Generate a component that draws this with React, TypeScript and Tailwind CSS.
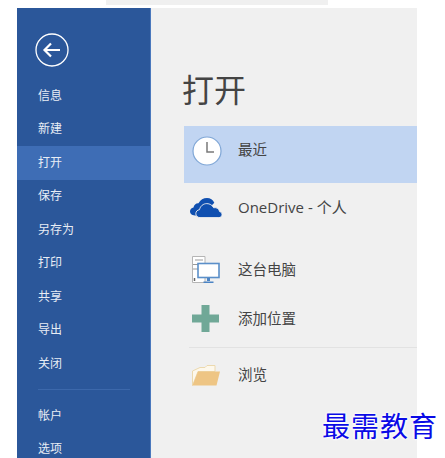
const NAV_TOP = ["信息", "新建", "打开", "保存", "另存为", "打印", "共享", "导出", "关闭"];
const NAV_BOTTOM = ["帐户", "选项"];
const CJK = "font-['Open_Sans','Noto_Sans_CJK_SC',sans-serif]";

function NavItem({ label }: { label: string }) {
  const active = label === "打开";
  return (
    <div
      className={`flex h-[33.5px] items-center pl-[21px] text-[12px] text-[#e8edf5] ${
        active ? "bg-[#3e6db5]" : ""
      }`}
    >
      {label}
    </div>
  );
}

function BackIcon() {
  return (
    <svg width="34" height="34" viewBox="0 0 34 34" fill="none" stroke="#fff">
      <circle cx="17" cy="17" r="16" strokeWidth="1.3" />
      <path d="M9.5 17H25M16 10.5 9.5 17l6.5 6.5" strokeWidth="2.2" />
    </svg>
  );
}

function ClockIcon() {
  return (
    <svg width="30" height="30" viewBox="0 0 30 30" fill="none">
      <circle cx="15" cy="15" r="14" fill="#fff" stroke="#7fa6d6" strokeWidth="1.2" />
      <path d="M15 6v10h7" stroke="#7a7a7a" strokeWidth="1.5" />
    </svg>
  );
}

function CloudIcon() {
  return (
    <svg width="32" height="20" viewBox="0 0 32 20">
      <path
        d="M5 17.500C1.500 17.500 0 15.300 0 13.300c0-2 1.500-3.700 3.500-3.900C4 6.800 6 5 8.500 5.200 10.300 1.800 13.500 0 17 0c3.300 0 6 1.800 7.300 4.800L12 17.500z"
        fill="#0f4fb0"
      />
      <path
        d="M10 19.600c-2.400 0-4.200-1.800-4.200-3.900 0-2.200 1.600-3.800 3.700-4C10.300 8 13.300 5.600 16.800 5.600c3 0 5.500 1.600 6.800 4.100 3.200-.6 5.600 1.300 6 3.900 1.400.4 2.400 1.500 2.400 3 0 1.700-1.300 3-3.100 3z"
        fill="#0f4fb0"
        stroke="#f0f0f0"
        strokeWidth="0.9"
      />
    </svg>
  );
}

function ComputerIcon() {
  return (
    <svg width="28" height="28" viewBox="0 0 28 28" fill="none">
      <path d="M.5.5h12.500v26H.5z" fill="#fff" stroke="#b5b5b5" />
      <path d="M3 4h8M1 8.500h12M1 13h7" stroke="#9a9a9a" />
      <path d="M2.500 22v3" stroke="#666" strokeWidth="1.500" />
      <rect x="6" y="7.500" width="21" height="14" fill="#fff" stroke="#5b8fc9" strokeWidth="1.600" />
      <path d="M15 22h3v3h-3zM11.500 25.500h10V27h-10z" fill="#4c84c4" />
    </svg>
  );
}

function PlusIcon() {
  return (
    <svg width="27" height="27" viewBox="0 0 27 27">
      <path d="M9.500 0h8v9.500H27v8h-9.500V27h-8v-9.500H0v-8h9.500z" fill="#70a897" />
    </svg>
  );
}

function FolderIcon() {
  return (
    <svg width="28" height="21" viewBox="0 0 28 21">
      <path d="M.5 20.500V6L8 2.500h5L15 .5h8v6H6L.5 20.500z" fill="#fdf8ec" stroke="#ecd9ae" />
      <path d="M6 6.500h22L24.500 20.500H.5z" fill="#eec584" />
    </svg>
  );
}

function PlaceRow({
  icon,
  label,
  height,
  selected,
  iconOffset,
  labelClass = "text-[14.5px]",
}: {
  icon: React.ReactNode;
  label: string;
  height: string;
  selected?: boolean;
  iconOffset: string;
  labelClass?: string;
}) {
  return (
    <div className={`flex items-center ${height} ${selected ? "bg-[#c1d5f2] pb-[7px]" : ""}`}>
      <div className={`flex w-[54px] shrink-0 justify-start ${iconOffset}`}>{icon}</div>
      <span className={`text-[#444] ${labelClass}`}>{label}</span>
    </div>
  );
}

export default function App() {
  return (
    <div className={`relative h-[458px] w-[445px] overflow-hidden bg-white ${CJK}`}>
      <div className="mb-[3px] ml-[106px] h-[5px] w-[222px] bg-[#f0f0f0]" />
      <div className="ml-[17px] flex h-[450px] w-[400px]">
        <aside className="w-[134px] shrink-0 border-r border-[#4a78bd] bg-[#2b579a]">
          <div className="pl-[18px] pt-[25px]">
            <BackIcon />
          </div>
          <nav className="mt-[12px]">
            {NAV_TOP.map((label) => (
              <NavItem key={label} label={label} />
            ))}
          </nav>
          <div className="mb-[9px] ml-[21px] mt-[8.5px] h-px w-[92px] bg-[#3c68ab]" />
          <nav>
            {NAV_BOTTOM.map((label) => (
              <NavItem key={label} label={label} />
            ))}
          </nav>
        </aside>
        <main className="flex-1 bg-[#f0f0f0] pl-[33px]">
          <h1 className="-ml-[2px] h-[118px] pt-[60px] text-[32px] leading-[44px] text-[#444]">打开</h1>
          <PlaceRow
            selected
            height="h-[57px]"
            iconOffset="pl-[8px]"
            icon={<ClockIcon />}
            label="最近"
            labelClass="mb-[3px] text-[14.5px]"
          />
          <PlaceRow
            height="h-[50px]"
            iconOffset="pl-[6px]"
            icon={<CloudIcon />}
            label="OneDrive - 个人"
            labelClass="mb-[1px] text-[15px]"
          />
          <div className="mt-[12px]">
            <PlaceRow height="h-[49px]" iconOffset="pl-[8px]" icon={<ComputerIcon />} label="这台电脑" />
            <PlaceRow height="h-[49px]" iconOffset="pl-[8px]" icon={<PlusIcon />} label="添加位置" />
          </div>
          <div className="ml-[5px] mt-[4px] h-px bg-[#e2e2e2]" />
          <PlaceRow height="h-[54px]" iconOffset="pl-[8px]" icon={<FolderIcon />} label="浏览" />
        </main>
      </div>
      <div className="absolute left-[322px] top-[410px] whitespace-nowrap text-[28px] font-normal leading-[32px] tracking-[1px] text-[#0a0ae6] [text-shadow:0_0_3px_#fff,0_0_3px_#fff,0_0_3px_#fff]">
        最需教育
      </div>
    </div>
  );
}
